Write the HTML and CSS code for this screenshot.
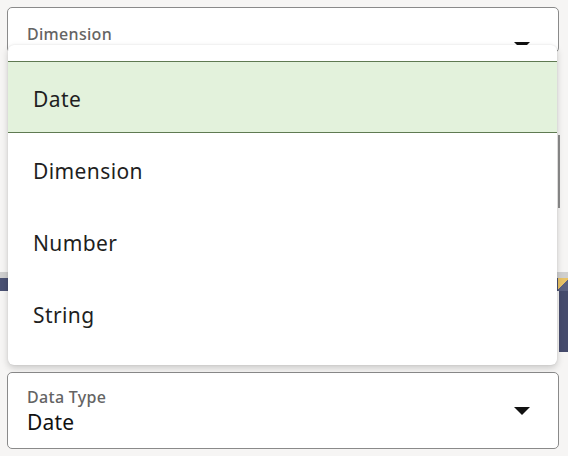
FILE: index.html
```html
<!DOCTYPE html>
<html>
<head>
<meta charset="utf-8">
<link rel="stylesheet" href="styles.css">
</head>
<body>
<div class="page">
  <div class="field field-top">
    <div class="field-main">
      <div class="label">Dimension</div>
    </div>
    <span class="arrow arrow-top"></span>
  </div>
  <div class="panel">
    <div class="scroll-line"></div>
  </div>
  <div class="bg-strip"></div>
  <div class="bg-band">
    <div class="band-left"></div>
    <div class="band-right"></div>
  </div>
  <div class="bg-lower">
    <div class="navy-block"></div>
  </div>
  <div class="field field-bottom">
    <div class="field-main">
      <div class="label">Data Type</div>
      <div class="value">Date</div>
    </div>
    <span class="arrow"></span>
  </div>

  <ul class="menu">
    <li class="item selected">Date</li>
    <li class="item">Dimension</li>
    <li class="item">Number</li>
    <li class="item">String</li>
  </ul>
</div>
</body>
</html>
```
FILE: styles.css
```css
html, body {
  margin: 0;
  padding: 0;
  background: #f6f5f4;
  font-family: "Noto Sans", "Open Sans", sans-serif;
  color: #1b1b1b;
}
.page {
  position: relative;
  width: 568px;
  height: 456px;
  overflow: hidden;
  padding-top: 7px;
  box-sizing: border-box;
}
.field {
  margin: 0 9px 0 7px;
  border: 1px solid #8a8a8a;
  border-radius: 5px;
  background: #fff;
  display: flex;
  align-items: center;
  padding: 0 28px 0 19px;
  box-sizing: border-box;
}
.field-top {
  height: 46px;
  align-items: flex-start;
  padding-top: 16px;
}
.field-main {
  flex: 1;
}
.label {
  font-size: 16px;
  color: #646464;
  line-height: 20px;
  font-weight: 500;
  letter-spacing: 0.3px;
}
.value {
  font-size: 21px;
  line-height: 26px;
  margin-top: 2px;
  color: #111;
  letter-spacing: 0.2px;
}
.arrow {
  width: 0;
  height: 0;
  border-left: 8px solid transparent;
  border-right: 8px solid transparent;
  border-top: 8px solid #111;
}
.arrow-top {
  margin-top: 18px;
}
.panel {
  height: 219px;
  display: flex;
  justify-content: flex-end;
  padding: 82px 8px 0 0;
  box-sizing: border-box;
}
.scroll-line {
  width: 2px;
  height: 73px;
  background: #8c8c8c;
}
.bg-strip {
  height: 6px;
  background: #cfcfcf;
}
.bg-band {
  display: flex;
  height: 13px;
}
.band-left {
  flex: 1;
  background: #4a5173;
}
.band-right {
  width: 10px;
  background: linear-gradient(135deg, #e8c266 50%, #5a6080 50%);
}
.bg-lower {
  display: flex;
  justify-content: flex-end;
  height: 81px;
}
.navy-block {
  width: 9px;
  height: 61px;
  background: #454b6c;
}
.field-bottom {
  height: 77px;
  padding-top: 1px;
}
.menu {
  position: absolute;
  left: 8px;
  top: 45px;
  width: 549px;
  margin: 0;
  padding: 16px 0;
  list-style: none;
  background: #fff;
  border-radius: 6px;
  box-shadow: 0 3px 7px rgba(0,0,0,0.18), 0 0 2px rgba(0,0,0,0.1);
}
.item {
  height: 72px;
  display: flex;
  align-items: center;
  padding: 3px 0 0 25px;
  font-size: 21px;
  letter-spacing: 0.4px;
  color: #1f1f1f;
  box-sizing: border-box;
}
.item.selected {
  background: #e3f2dc;
  border-top: 1px solid #5f7a52;
  border-bottom: 1px solid #5f7a52;
}
```
